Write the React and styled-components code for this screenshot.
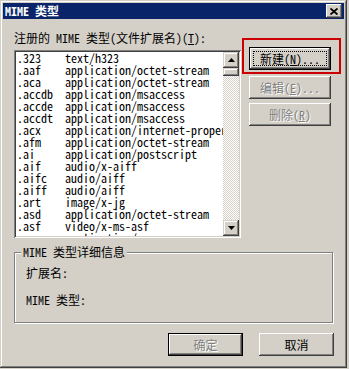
import React from 'react';
import styled, { createGlobalStyle } from 'styled-components';

const GlobalStyle = createGlobalStyle`
  body {
    margin: 0;
    background: #d4d0c8;
    font-family: "Noto Sans Mono CJK SC", "Noto Sans CJK SC", "Liberation Mono", monospace;
    font-size: 12px;
  }
`;

const FACE = '#d4d0c8';

const Window = styled.div`
  width: 347px;
  height: 368px;
  box-sizing: border-box;
  padding: 3px;
  background: ${FACE};
  box-shadow: inset -1px -1px #404040, inset 1px 1px ${FACE},
    inset -2px -2px #808080, inset 2px 2px #fff;
  display: flex;
  flex-direction: column;
`;

const TitleBar = styled.div`
  height: 16px;
  background: #0a246a;
  display: flex;
  align-items: center;
  justify-content: space-between;
  padding: 0 2px;
`;

const TitleText = styled.span`
  color: #fff;
  font-weight: bold;
  line-height: 12px;
`;

const CloseButton = styled.div`
  width: 16px;
  height: 14px;
  box-sizing: border-box;
  background: ${FACE};
  box-shadow: inset -1px -1px #404040, inset 1px 1px #fff,
    inset -2px -2px #808080, inset 2px 2px ${FACE};
  display: flex;
  align-items: center;
  justify-content: center;
`;

const Body = styled.div`
  flex: 1;
  padding: 13px 10px 0 11px;
  display: flex;
  flex-direction: column;
`;

const TopArea = styled.div`
  display: flex;
  gap: 8px;
`;

const LeftCol = styled.div`
  width: 227px;
  display: flex;
  flex-direction: column;
`;

const Label = styled.div`
  line-height: 12px;
  height: 12px;
  white-space: nowrap;
  margin-bottom: 6px;
`;

const ListBox = styled.div`
  height: 188px;
  box-sizing: border-box;
  padding: 2px;
  background: #fff;
  box-shadow: inset 1px 1px #808080, inset -1px -1px #fff,
    inset 2px 2px #404040, inset -2px -2px ${FACE};
  display: flex;
`;

const Rows = styled.div`
  flex: 1;
  overflow: hidden;
  padding-left: 1px;
`;

const Row = styled.div`
  display: flex;
  height: 12px;
  line-height: 12px;
  white-space: nowrap;
`;

const Ext = styled.span`
  width: 48px;
  flex: none;
`;

const ScrollBar = styled.div`
  width: 16px;
  display: flex;
  flex-direction: column;
  background-color: #fff;
  background-image: conic-gradient(
    ${FACE} 90deg,
    #fff 90deg 180deg,
    ${FACE} 180deg 270deg,
    #fff 270deg
  );
  background-size: 2px 2px;
`;

const Raised = styled.div`
  box-sizing: border-box;
  background: ${FACE};
  box-shadow: inset -1px -1px #404040, inset 1px 1px ${FACE},
    inset -2px -2px #808080, inset 2px 2px #fff;
`;

const ArrowButton = styled(Raised)`
  height: 16px;
  display: flex;
  align-items: center;
  justify-content: center;
`;

const Thumb = styled(Raised)`
  height: 8px;
`;

const Track = styled.div`
  flex: 1;
`;

const RightCol = styled.div`
  width: 82px;
  padding-top: 15px;
  display: flex;
  flex-direction: column;
  gap: 4px;
`;

const Button = styled.div`
  position: relative;
  box-sizing: border-box;
  width: ${(p) => p.$w || 82}px;
  height: 23px;
  background: ${FACE};
  display: flex;
  align-items: center;
  justify-content: center;
  line-height: 12px;
  white-space: nowrap;
  color: ${(p) => (p.$disabled ? '#808080' : '#000')};
  text-shadow: ${(p) => (p.$disabled ? '1px 1px 0 #fff' : 'none')};
  box-shadow: ${(p) =>
    p.$default
      ? `inset 0 0 0 1px #000, inset -2px -2px #404040, inset 2px 2px #fff,
         inset -3px -3px #808080, inset 3px 3px ${FACE}`
      : `inset -1px -1px #404040, inset 1px 1px #fff,
         inset -2px -2px #808080, inset 2px 2px ${FACE}`};
`;

const Focus = styled.span`
  position: absolute;
  inset: 4px;
  border: 1px dotted #000;
`;

const Highlight = styled.div`
  position: relative;
  margin-bottom: 2px;

  &::after {
    content: '';
    position: absolute;
    top: -9px;
    left: -7px;
    right: -10px;
    bottom: -4px;
    border: 2px solid #cc0000;
    pointer-events: none;
  }
`;

const GroupBox = styled.div`
  margin-top: 14px;
  width: 317px;
  height: 69px;
  border: 1px solid #808080;
  box-shadow: inset 1px 1px 0 #fff, 1px 1px 0 #fff;
  display: flex;
  flex-direction: column;
  align-items: flex-start;
`;

const Legend = styled.span`
  margin: -7px 0 0 6px;
  padding: 0 2px;
  background: ${FACE};
  line-height: 12px;
`;

const Field = styled.div`
  margin: ${(p) => p.$top}px 0 0 11px;
  line-height: 12px;
`;

const ButtonRow = styled.div`
  margin-top: 10px;
  display: flex;
  justify-content: flex-end;
  gap: 16px;
`;

const entries = [
  ['.323', 'text/h323'],
  ['.aaf', 'application/octet-stream'],
  ['.aca', 'application/octet-stream'],
  ['.accdb', 'application/msaccess'],
  ['.accde', 'application/msaccess'],
  ['.accdt', 'application/msaccess'],
  ['.acx', 'application/internet-property-stream'],
  ['.afm', 'application/octet-stream'],
  ['.ai', 'application/postscript'],
  ['.aif', 'audio/x-aiff'],
  ['.aifc', 'audio/aiff'],
  ['.aiff', 'audio/aiff'],
  ['.art', 'image/x-jg'],
  ['.asd', 'application/octet-stream'],
  ['.asf', 'video/x-ms-asf'],
  ['.asm', 'application/x-asm'],
];

function Arrow({ down }) {
  return (
    <svg width="7" height="4" viewBox="0 0 7 4">
      <path d={down ? 'M0 0h7L3.5 4z' : 'M0 4h7L3.5 0z'} fill="#000" />
    </svg>
  );
}

export default function App() {
  return (
    <>
      <GlobalStyle />
      <Window>
        <TitleBar>
          <TitleText>MIME 类型</TitleText>
          <CloseButton>
            <svg width="8" height="7" viewBox="0 0 8 7">
              <path d="M0.5 0.5L7.5 6.5M7.5 0.5L0.5 6.5" stroke="#000" strokeWidth="1.8" />
            </svg>
          </CloseButton>
        </TitleBar>
        <Body>
          <TopArea>
            <LeftCol>
              <Label>
                注册的 MIME 类型(文件扩展名)(<u>T</u>):
              </Label>
              <ListBox>
                <Rows>
                  {entries.map(([ext, type]) => (
                    <Row key={ext}>
                      <Ext>{ext}</Ext>
                      <span>{type}</span>
                    </Row>
                  ))}
                </Rows>
                <ScrollBar>
                  <ArrowButton>
                    <Arrow />
                  </ArrowButton>
                  <Thumb />
                  <Track />
                  <ArrowButton>
                    <Arrow down />
                  </ArrowButton>
                </ScrollBar>
              </ListBox>
            </LeftCol>
            <RightCol>
              <Highlight>
                <Button $default>
                  <Focus />
                  新建(<u>N</u>)...
                </Button>
              </Highlight>
              <Button $disabled>
                编辑(<u>E</u>)...
              </Button>
              <Button $disabled>
                删除(<u>R</u>)
              </Button>
            </RightCol>
          </TopArea>
          <GroupBox>
            <Legend>MIME 类型详细信息</Legend>
            <Field $top={9}>扩展名:</Field>
            <Field $top={15}>MIME 类型:</Field>
          </GroupBox>
          <ButtonRow>
            <Button $w={75} $default $disabled>
              确定
            </Button>
            <Button $w={75}>取消</Button>
          </ButtonRow>
        </Body>
      </Window>
    </>
  );
}
